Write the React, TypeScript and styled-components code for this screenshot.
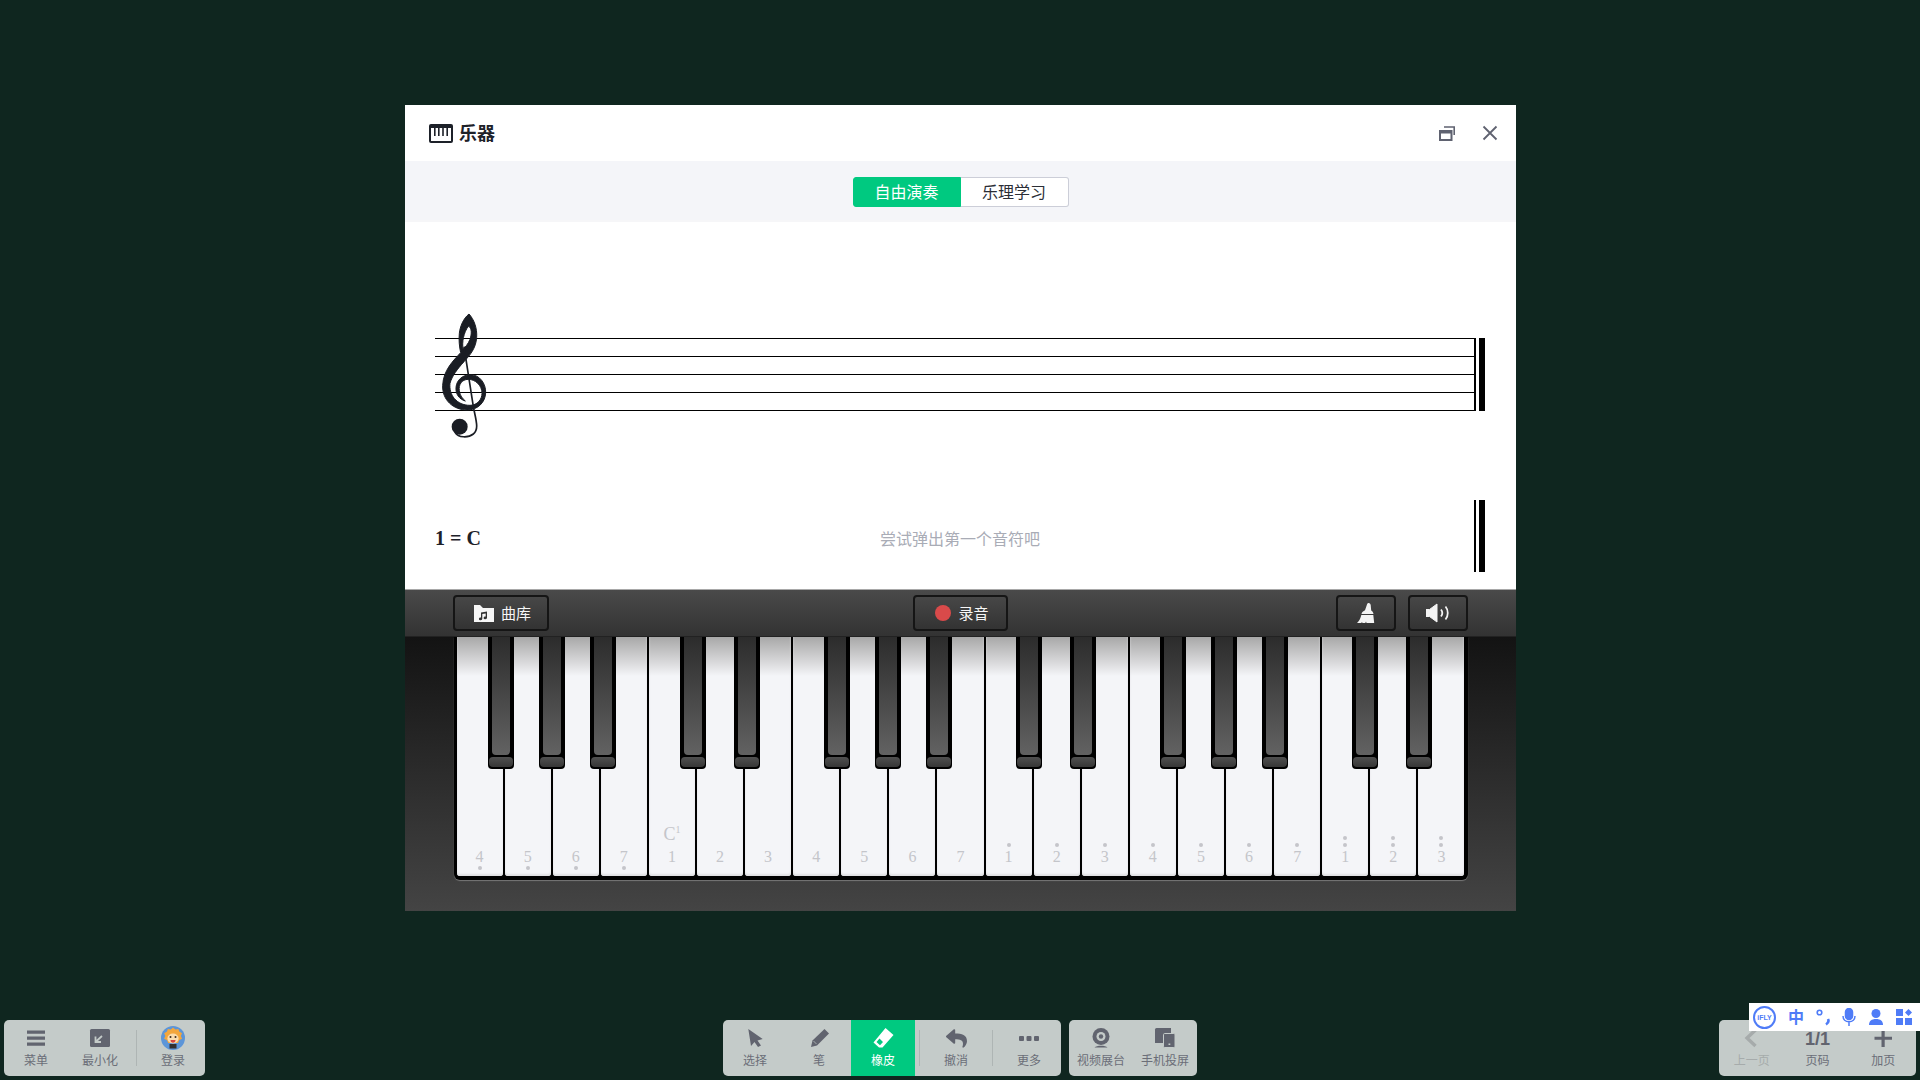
import React from 'react';
import styled, { createGlobalStyle } from 'styled-components';
import { FaReply } from 'react-icons/fa';

const CJK = `"Noto Sans CJK SC", "Liberation Sans", sans-serif`;
const ICON = '#61646f';
const PANEL = '#c4cbc9';
const IME_BLUE = '#4f7cf7';

type Note = { digit: number; above?: number; below?: number; mark?: boolean };

const NOTES: Note[] = [
	{ digit: 4, below: 1 },
	{ digit: 5, below: 1 },
	{ digit: 6, below: 1 },
	{ digit: 7, below: 1 },
	{ digit: 1, mark: true },
	{ digit: 2 },
	{ digit: 3 },
	{ digit: 4 },
	{ digit: 5 },
	{ digit: 6 },
	{ digit: 7 },
	{ digit: 1, above: 1 },
	{ digit: 2, above: 1 },
	{ digit: 3, above: 1 },
	{ digit: 4, above: 1 },
	{ digit: 5, above: 1 },
	{ digit: 6, above: 1 },
	{ digit: 7, above: 1 },
	{ digit: 1, above: 2 },
	{ digit: 2, above: 2 },
	{ digit: 3, above: 2 },
];

const BLACK_KEYS = [31, 82, 133, 223, 277.5, 367.5, 418.5, 469.5, 559.5, 613.5, 703.5, 754.5, 805.5, 895.5, 949.5];

function PianoIcon() {
	return (
		<svg width="24" height="19" viewBox="0 0 24 19">
			<rect width="24" height="19" rx="2" fill="#1d2129" />
			<rect x="2" y="4" width="20" height="13" fill="#fff" />
			<path d="M5 4h1.6v8H5zM9 4h1.6v8H9zM13.2 4h1.6v8h-1.6zM17.4 4H19v8h-1.6z" fill="#1d2129" />
		</svg>
	);
}

function RestoreIcon() {
	return (
		<svg width="16" height="15" viewBox="0 0 16 15" fill="none" stroke="#5f6270">
			<path d="M5 1h10.200v8" strokeWidth="1.600" />
			<path d="M1 5h11.500v9H1z" strokeWidth="2" />
			<path d="M1 6.500h11.500" strokeWidth="2" />
		</svg>
	);
}

function CloseIcon() {
	return (
		<svg width="16" height="16" viewBox="0 0 16 16" fill="none" stroke="#5f6270" strokeWidth="1.800">
			<path d="M1.500 1.500l13 13M14.500 1.500l-13 13" />
		</svg>
	);
}

function TrebleClef() {
	return (
		<svg width="100" height="150" viewBox="0 0 300 450">
			<path
				fill="#1a1d24"
				stroke="#1a1d24"
				strokeWidth="3"
				fillRule="evenodd"
				d="M147 42C162 58 172 85 170 112C168 145 150 165 132 185C112 207 96 228 90 250C86 285 110 316 150 316C172 316 186 298 186 280C186 255 165 238 145 238C125 238 115 255 118 272C120 288 128 296 136 303C118 298 106 282 108 262C110 240 128 224 152 224C178 224 198 250 197 278C196 308 172 330 142 330C100 330 66 300 68 256C70 210 100 182 122 158C118 140 116 120 118 100C120 80 130 55 147 42ZM146 78C155 85 156 100 150 118C144 133 135 142 129 148C126 128 130 97 146 78Z"
			/>
			<path
				fill="none"
				stroke="#1a1d24"
				strokeWidth="5"
				d="M132 140L160 320C168 362 178 388 160 402C145 414 115 414 105 397"
			/>
			<circle cx="119" cy="380" r="24" fill="#1a1d24" />
		</svg>
	);
}

function FolderIcon() {
	return (
		<svg width="20" height="17" viewBox="0 0 20 17">
			<path d="M0 0h6l3 3h11v14H0z" fill="#f6f6f6" />
			<path d="M7 7.500l6-1v6.300a1.700 1.400 0 1 1-1.300-1.300V8.400l-3.400.6v4.800a1.700 1.400 0 1 1-1.300-1.300z" fill="#333" />
		</svg>
	);
}

function BroomIcon() {
	return (
		<svg width="18" height="20" viewBox="0 0 18 20" fill="#f4f4f4">
			<path d="M11.500 0c1.200 0 2 .8 2.200 2l.5 5.500c1 .6 2 1.500 2.300 3.500H4.500c.3-2 1.800-3 3.500-3.800L10 1.500C10.300.5 10.800 0 11.500 0z" />
			<path d="M4.300 12h12l.9 8H9.500l-.5-1.500-.7 1.500H5.500l-.5-1-.8 1H0c2-1.500 3.500-4.500 4.300-8z" />
		</svg>
	);
}

function SpeakerIcon() {
	return (
		<svg width="24" height="20" viewBox="0 0 24 20" fill="none">
			<path d="M0 6.500h3.500L11 1v18l-7.500-5.500H0z" fill="#f4f4f4" stroke="#f4f4f4" strokeLinejoin="round" />
			<path d="M15 6.500c1.500 2 1.500 5 0 7M19.500 3.500c3 3.500 3 9.500 0 13" stroke="#f4f4f4" strokeWidth="1.800" />
		</svg>
	);
}

function MenuIcon() {
	return (
		<svg width="24" height="24" viewBox="0 0 24 24" fill={ICON}>
			<path d="M3 4.500h18v3.200H3zM3 10.500h18v3.200H3zM3 16.500h18v3.200H3z" />
		</svg>
	);
}

function MinimizeIcon() {
	return (
		<svg width="24" height="24" viewBox="0 0 24 24">
			<rect x="2" y="3" width="20" height="18" rx="1.500" fill={ICON} />
			<path d="M14 10l-6 5.500M7.500 10.500v5.500h5.500" fill="none" stroke={PANEL} strokeWidth="1.800" />
		</svg>
	);
}

function AvatarIcon() {
	return (
		<svg width="24" height="24" viewBox="0 0 24 24">
			<circle cx="12" cy="12" r="12" fill="#5c95d8" />
			<path
				d="M12 1.500l2.400 2 3-.6.800 2.700 2.800 1.600-1.100 2.900 1.200 2.700-3 1.400-1 2.700H7.100l-1-2.700-3-1.400 1.200-2.700-1.100-2.900 2.800-1.600.8-2.700 3 .6z"
				fill="#f3a63c"
			/>
			<ellipse cx="12" cy="12.500" rx="5.600" ry="5" fill="#fbdcae" />
			<circle cx="9.500" cy="11" r="1" fill="#3a2a20" />
			<circle cx="14.500" cy="11" r="1" fill="#3a2a20" />
			<path d="M9.500 14h5c0 1.800-1 2.800-2.500 2.800S9.500 15.800 9.500 14z" fill="#d8483f" />
			<path d="M8.500 18h7v4.500h-7z" fill="#33302e" />
		</svg>
	);
}

function CursorIcon() {
	return (
		<svg width="24" height="24" viewBox="0 0 24 24" fill={ICON}>
			<path d="M5.300 3L19.700 13l-5.200 1.500L18 19.500 15 21l-3.500-5L8 20z" />
		</svg>
	);
}

function PenIcon() {
	return (
		<svg width="24" height="24" viewBox="0 0 24 24" fill={ICON}>
			<path d="M17.500 3L22 7.500 10 19.500 4 21 5.500 14.500z" />
			<path d="M6.500 15l3 3" stroke={PANEL} strokeWidth="0.700" />
		</svg>
	);
}

function EraserIcon() {
	return (
		<svg width="24" height="24" viewBox="0 0 24 24" fill="#fff">
			<path
				fillRule="evenodd"
				d="M14.500 2L22.500 9 11.500 21.500H8L2.500 16.500zM8.500 12.500L5.500 16 9 19.200 12 16z"
			/>
		</svg>
	);
}

function MoreIcon() {
	return (
		<svg width="24" height="24" viewBox="0 0 24 24" fill={ICON}>
			<rect x="2" y="10" width="5" height="5" rx="1" />
			<rect x="9.500" y="10" width="5" height="5" rx="1" />
			<rect x="17" y="10" width="5" height="5" rx="1" />
		</svg>
	);
}

function CameraIcon() {
	return (
		<svg width="24" height="24" viewBox="0 0 24 24">
			<circle cx="12" cy="10.500" r="8.500" fill={ICON} />
			<circle cx="12" cy="10.500" r="4.500" fill={PANEL} />
			<circle cx="12" cy="10.500" r="2.200" fill={ICON} />
			<path d="M5.500 21.500c2-2.500 11-2.500 13 0z" fill={ICON} />
		</svg>
	);
}

function ScreenIcon() {
	return (
		<svg width="24" height="24" viewBox="0 0 24 24">
			<path d="M2 3.500A1.500 1.500 0 0 1 3.500 2H18v15H2z" fill={ICON} />
			<rect x="10.500" y="7.500" width="11.500" height="14" rx="1.200" fill={ICON} stroke={PANEL} />
			<rect x="15.500" y="17.500" width="1.800" height="1.500" fill={PANEL} />
		</svg>
	);
}

function ChevronIcon() {
	return (
		<svg width="24" height="24" viewBox="0 0 24 24" fill="none" stroke="#a6abab" strokeWidth="3.400">
			<path d="M15.500 4L7 12l8.500 8" />
		</svg>
	);
}

function PlusIcon() {
	return (
		<svg width="24" height="24" viewBox="0 0 24 24" fill={ICON}>
			<path d="M10.500 3.500h3.200v7.200H21v3.100h-7.300V21h-3.200v-7.200H3.500v-3.100h7z" />
		</svg>
	);
}

function PunctIcon() {
	return (
		<svg width="14" height="18" viewBox="0 0 14 18" fill="none" stroke={IME_BLUE}>
			<circle cx="3.500" cy="4.500" r="2.300" strokeWidth="1.600" />
			<path d="M12 11c1 2 .4 4-2 5.500" strokeWidth="2.600" />
		</svg>
	);
}

function MicIcon() {
	return (
		<svg width="14" height="18" viewBox="0 0 14 18" fill="none" stroke={IME_BLUE} strokeWidth="1.500">
			<rect x="3.500" y="0.500" width="7" height="11" rx="3.500" fill={IME_BLUE} />
			<path d="M1 8c0 3.500 2.500 5.800 6 5.800s6-2.300 6-5.800M7 14v4" />
		</svg>
	);
}

function UserIcon() {
	return (
		<svg width="16" height="16" viewBox="0 0 16 16" fill={IME_BLUE}>
			<circle cx="8" cy="4.500" r="4.500" />
			<path d="M1 16c0-4 2.500-6 7-6s7 2 7 6z" />
		</svg>
	);
}

function GridIcon() {
	return (
		<svg width="16" height="16" viewBox="0 0 16 16" fill={IME_BLUE}>
			<rect width="7" height="7" />
			<path d="M12.500 0l3.500 3.500-3.500 3.500L9 3.500z" />
			<rect y="9" width="7" height="7" />
			<rect x="9" y="9" width="7" height="7" />
		</svg>
	);
}

function PianoKey({ note }: { note: Note }) {
	return (
		<WhiteKey>
			{note.mark && (
				<PitchMark>
					C<sup>1</sup>
				</PitchMark>
			)}
			<DotRow>
				{Array.from({ length: note.above ?? 0 }).map((_, i) => (
					<NoteDot key={i} />
				))}
			</DotRow>
			<NoteDigit>{note.digit}</NoteDigit>
			<BelowSlot>{note.below ? <NoteDot /> : null}</BelowSlot>
		</WhiteKey>
	);
}

export default function App() {
	return (
		<>
			<GlobalStyle />
			<Page>
				<Dialog>
					<DialogHeader>
						<DialogTitle>
							<PianoIcon />
							<TitleText>乐器</TitleText>
						</DialogTitle>
						<HeaderActions>
							<RestoreIcon />
							<CloseIcon />
						</HeaderActions>
					</DialogHeader>
					<TabBar>
						<Tab $active>自由演奏</Tab>
						<Tab>乐理学习</Tab>
					</TabBar>
					<Score>
						<StaffRow>
							<ClefHolder>
								<TrebleClef />
							</ClefHolder>
							<StaffLines>
								<StaffLine />
								<StaffLine />
								<StaffLine />
								<StaffLine />
								<StaffLine />
							</StaffLines>
							<EndBar />
						</StaffRow>
						<NotationRow>
							<KeyName>1 = C</KeyName>
							<Hint>尝试弹出第一个音符吧</Hint>
							<EndBarSlot>
								<EndBar />
							</EndBarSlot>
						</NotationRow>
					</Score>
					<PianoToolbar>
						<ToolGroup>
							<ToolButton $width={96} $labelled>
								<FolderIcon />
								<ToolText>曲库</ToolText>
							</ToolButton>
						</ToolGroup>
						<ToolButton $width={95} $labelled>
							<RecordDot />
							<ToolText>录音</ToolText>
						</ToolButton>
						<ToolGroup $end>
							<ToolButton $width={60}>
								<BroomIcon />
							</ToolButton>
							<ToolButton $width={60}>
								<SpeakerIcon />
							</ToolButton>
						</ToolGroup>
					</PianoToolbar>
					<PianoBody>
						<Keyboard>
							{NOTES.map((note, i) => (
								<PianoKey key={i} note={note} />
							))}
							{BLACK_KEYS.map((left) => (
								<BlackKey key={left} $left={left}>
									<BlackFace />
									<BlackTip />
								</BlackKey>
							))}
						</Keyboard>
					</PianoBody>
				</Dialog>
				<BottomBar>
					<PanelGroup>
						<Panel>
							<BarItem>
								<IconSlot>
									<MenuIcon />
								</IconSlot>
								<BarLabel>菜单</BarLabel>
							</BarItem>
							<BarItem>
								<IconSlot>
									<MinimizeIcon />
								</IconSlot>
								<BarLabel>最小化</BarLabel>
							</BarItem>
							<Divider />
							<BarItem>
								<IconSlot>
									<AvatarIcon />
								</IconSlot>
								<BarLabel>登录</BarLabel>
							</BarItem>
						</Panel>
					</PanelGroup>
					<PanelGroup>
						<Panel>
							<BarItem>
								<IconSlot>
									<CursorIcon />
								</IconSlot>
								<BarLabel>选择</BarLabel>
							</BarItem>
							<BarItem>
								<IconSlot>
									<PenIcon />
								</IconSlot>
								<BarLabel>笔</BarLabel>
							</BarItem>
							<BarItem $active>
								<IconSlot>
									<EraserIcon />
								</IconSlot>
								<BarLabel>橡皮</BarLabel>
							</BarItem>
							<Divider />
							<BarItem>
								<IconSlot>
									<FaReply size={21} color={ICON} />
								</IconSlot>
								<BarLabel>撤消</BarLabel>
							</BarItem>
							<Divider />
							<BarItem>
								<IconSlot>
									<MoreIcon />
								</IconSlot>
								<BarLabel>更多</BarLabel>
							</BarItem>
						</Panel>
						<Panel>
							<BarItem>
								<IconSlot>
									<CameraIcon />
								</IconSlot>
								<BarLabel>视频展台</BarLabel>
							</BarItem>
							<BarItem>
								<IconSlot>
									<ScreenIcon />
								</IconSlot>
								<BarLabel>手机投屏</BarLabel>
							</BarItem>
						</Panel>
					</PanelGroup>
					<PanelGroup $end>
						<PagerPanel>
							<BarItem $grow>
								<IconSlot>
									<ChevronIcon />
								</IconSlot>
								<BarLabel $muted>上一页</BarLabel>
							</BarItem>
							<BarItem $grow>
								<IconSlot>
									<PageCount>1/1</PageCount>
								</IconSlot>
								<BarLabel>页码</BarLabel>
							</BarItem>
							<BarItem $grow>
								<IconSlot>
									<PlusIcon />
								</IconSlot>
								<BarLabel>加页</BarLabel>
							</BarItem>
						</PagerPanel>
					</PanelGroup>
				</BottomBar>
				<ImeBar>
					<ImeLogo>iFLY</ImeLogo>
					<ImeGlyph>中</ImeGlyph>
					<PunctIcon />
					<MicIcon />
					<UserIcon />
					<GridIcon />
				</ImeBar>
			</Page>
		</>
	);
}

const GlobalStyle = createGlobalStyle`
	html, body {
		margin: 0;
		padding: 0;
		background: #0f261f;
		font-family: ${CJK};
	}
	* {
		box-sizing: border-box;
	}
`;

const Page = styled.div`
	display: flex;
	flex-direction: column;
	justify-content: space-between;
	height: 100vh;
	overflow: hidden;
	padding: 105px 4px 4px;
`;

const Dialog = styled.div`
	display: flex;
	flex-direction: column;
	width: 1111px;
	margin-left: 401px;
	background: #fff;
`;

const DialogHeader = styled.div`
	display: flex;
	align-items: center;
	justify-content: space-between;
	height: 56px;
	padding: 0 18px 0 24px;
`;

const DialogTitle = styled.div`
	display: flex;
	align-items: center;
	gap: 6px;
	font-size: 18px;
	font-weight: 700;
	color: #1d2129;
`;

const TitleText = styled.span`
	margin-top: -2px;
`;

const HeaderActions = styled.div`
	display: flex;
	align-items: center;
	gap: 27px;
`;

const TabBar = styled.div`
	display: flex;
	justify-content: center;
	align-items: flex-start;
	height: 61px;
	padding-top: 16px;
	background: #f4f5f9;
	border-bottom: 2px solid #f6f6f8;
`;

const Tab = styled.div<{ $active?: boolean }>`
	display: flex;
	align-items: center;
	justify-content: center;
	width: 108px;
	height: 30px;
	padding-bottom: 2px;
	font-size: 16px;
	color: ${({ $active }) => ($active ? '#fff' : '#2b2e36')};
	background: ${({ $active }) => ($active ? '#00c980' : '#fff')};
	border: 1px solid ${({ $active }) => ($active ? '#00c980' : '#ccced8')};
	border-left-width: ${({ $active }) => ($active ? '1px' : '0')};
	border-radius: ${({ $active }) => ($active ? '3px 0 0 3px' : '0 3px 3px 0')};
`;

const Score = styled.div`
	display: flex;
	flex-direction: column;
	height: 367px;
	padding: 116px 31px 0 30px;
`;

const StaffRow = styled.div`
	position: relative;
	display: flex;
	height: 73px;
`;

const ClefHolder = styled.div`
	position: absolute;
	left: -15px;
	top: -38px;
`;

const StaffLines = styled.div`
	display: flex;
	flex: 1;
	flex-direction: column;
	justify-content: space-between;
`;

const StaffLine = styled.div`
	height: 1px;
	background: #000;
`;

const EndBar = styled.div`
	flex: none;
	width: 11px;
	height: 100%;
	border-left: 2px solid #000;
	border-right: 6px solid #000;
`;

const NotationRow = styled.div`
	display: grid;
	grid-template-columns: 1fr auto 1fr;
	align-items: center;
	height: 72px;
	margin-top: 89px;
`;

const KeyName = styled.div`
	padding-top: 5px;
	font-family: 'Liberation Serif', serif;
	font-size: 20px;
	font-weight: 700;
	color: #1d2129;
`;

const Hint = styled.div`
	padding-top: 4px;
	font-size: 16px;
	color: #a9acb6;
`;

const EndBarSlot = styled.div`
	display: flex;
	justify-content: flex-end;
	height: 100%;
`;

const PianoToolbar = styled.div`
	display: grid;
	grid-template-columns: 1fr auto 1fr;
	align-items: center;
	height: 48px;
	padding: 0 48px;
	background: linear-gradient(#4a4a4a, #333);
	border-top: 1px solid #a8a8a8;
	border-bottom: 1px solid #222;
`;

const ToolGroup = styled.div<{ $end?: boolean }>`
	display: flex;
	justify-content: ${({ $end }) => ($end ? 'flex-end' : 'flex-start')};
	gap: 12px;
`;

const ToolButton = styled.div<{ $width: number; $labelled?: boolean }>`
	display: flex;
	align-items: center;
	justify-content: center;
	gap: 7px;
	width: ${({ $width }) => $width}px;
	height: 36px;
	padding-left: ${({ $labelled }) => ($labelled ? '3px' : '0')};
	font-size: 15px;
	color: #f6f6f6;
	background: linear-gradient(#474747, #333);
	border: 2px solid #151515;
	border-radius: 4px;
`;

const ToolText = styled.span`
	margin-top: -2px;
`;

const RecordDot = styled.span`
	width: 16px;
	height: 16px;
	background: #d94a4a;
	border-radius: 50%;
`;

const PianoBody = styled.div`
	display: flex;
	justify-content: center;
	height: 274px;
	background: linear-gradient(#131313, #444);
`;

const Keyboard = styled.div`
	position: relative;
	display: flex;
	gap: 2px;
	width: 1014px;
	height: 243px;
	background: #000;
	border: solid #000;
	border-width: 0 3px 4px;
	border-radius: 0 0 6px 6px;
	box-shadow: 0 1px 1px #777;
`;

const WhiteKey = styled.div`
	position: relative;
	display: flex;
	flex: 1;
	flex-direction: column;
	align-items: center;
	justify-content: flex-end;
	font-family: 'Liberation Serif', serif;
	color: #c4c5ca;
	background: linear-gradient(#a8a8a8, #dcdcde 27px, #f4f5f8 39px);
	border-radius: 0 0 3px 3px;
	box-shadow: inset 0 -2px 2px #e0e0e3;
`;

const PitchMark = styled.div`
	font-size: 18px;
	line-height: 18px;
	margin-bottom: 4px;

	sup {
		font-size: 10px;
		line-height: 0;
	}
`;

const DotRow = styled.div`
	display: flex;
	flex-direction: column;
	align-items: center;
	gap: 3px;
	margin-bottom: 1px;
`;

const NoteDot = styled.span`
	display: block;
	width: 4px;
	height: 4px;
	background: #c4c5ca;
	border-radius: 50%;
`;

const NoteDigit = styled.div`
	font-size: 16px;
	line-height: 18px;
`;

const BelowSlot = styled.div`
	display: flex;
	justify-content: center;
	align-items: flex-end;
	height: 10px;
	padding-bottom: 6px;
`;

const BlackKey = styled.div<{ $left: number }>`
	position: absolute;
	top: 0;
	left: ${({ $left }) => $left}px;
	display: flex;
	flex-direction: column;
	width: 26px;
	height: 132px;
	padding: 0 1px 2px;
	background: #000;
	border-radius: 0 0 4px 4px;
`;

const BlackFace = styled.div`
	flex: 1;
	margin: 0 3px;
	background: linear-gradient(#2c2c2c, #626262);
	border-radius: 0 0 4px 4px;
`;

const BlackTip = styled.div`
	flex: none;
	height: 10px;
	margin-top: 2px;
	background: linear-gradient(#505050, #363636);
	border-radius: 4px;
`;

const BottomBar = styled.div`
	display: grid;
	grid-template-columns: 1fr auto 1fr;
`;

const PanelGroup = styled.div<{ $end?: boolean }>`
	display: flex;
	justify-content: ${({ $end }) => ($end ? 'flex-end' : 'flex-start')};
	gap: 8px;
`;

const Panel = styled.div`
	display: flex;
	align-items: stretch;
	height: 56px;
	overflow: hidden;
	background: ${PANEL};
	border-radius: 5px;
`;

const PagerPanel = styled(Panel)`
	width: 197px;
`;

const BarItem = styled.div<{ $active?: boolean; $grow?: boolean }>`
	display: flex;
	flex-direction: column;
	align-items: center;
	flex: ${({ $grow }) => ($grow ? '1' : 'none')};
	width: ${({ $grow }) => ($grow ? 'auto' : '64px')};
	padding-top: 6px;
	color: ${({ $active }) => ($active ? '#fff' : '#6b6e78')};
	background: ${({ $active }) => ($active ? '#00c980' : 'transparent')};
`;

const IconSlot = styled.div`
	display: flex;
	align-items: center;
	justify-content: center;
	height: 24px;
`;

const BarLabel = styled.div<{ $muted?: boolean }>`
	margin-top: 2px;
	font-size: 12px;
	line-height: 16px;
	white-space: nowrap;
	color: ${({ $muted }) => ($muted ? '#a6abab' : 'inherit')};
`;

const Divider = styled.div`
	flex: none;
	width: 1px;
	margin: 10px 4px 10px;
	background: #aeb5b4;
`;

const PageCount = styled.span`
	margin-top: 3px;
	font-family: 'Liberation Sans', sans-serif;
	font-size: 18px;
	font-weight: 700;
	color: ${ICON};
`;

const ImeBar = styled.div`
	position: fixed;
	right: 0;
	bottom: 49px;
	display: flex;
	align-items: center;
	gap: 12px;
	width: 171px;
	height: 28px;
	padding-left: 4px;
	background: #fff;
`;

const ImeLogo = styled.div`
	display: flex;
	flex: none;
	align-items: center;
	justify-content: center;
	width: 23px;
	height: 23px;
	font-family: 'Liberation Sans', sans-serif;
	font-size: 7px;
	font-weight: 700;
	color: ${IME_BLUE};
	border: 2px solid ${IME_BLUE};
	border-radius: 50%;
`;

const ImeGlyph = styled.div`
	width: 16px;
	margin-top: -2px;
	font-size: 16px;
	font-weight: 700;
	color: ${IME_BLUE};
`;
